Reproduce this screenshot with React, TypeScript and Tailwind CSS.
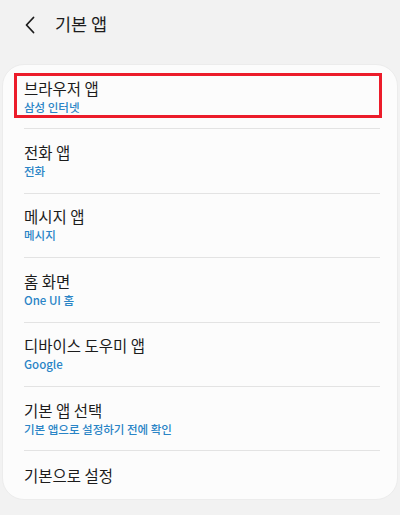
const rows = [
  { title: "브라우저 앱", sub: "삼성 인터넷" },
  { title: "전화 앱", sub: "전화" },
  { title: "메시지 앱", sub: "메시지" },
  { title: "홈 화면", sub: "One UI 홈" },
  { title: "디바이스 도우미 앱", sub: "Google" },
  { title: "기본 앱 선택", sub: "기본 앱으로 설정하기 전에 확인" },
];

export default function App() {
  return (
    <div
      className="w-[400px] h-[515px] bg-[#f2f2f2] overflow-hidden"
      style={{ fontFamily: '"Noto Sans CJK KR", "Noto Sans", Roboto, sans-serif' }}
    >
      <header className="h-[64px] flex items-start pt-[12px] pl-[22px]">
        <svg width="18" height="24" viewBox="0 0 18 24" className="mt-[1px]">
          <path d="M11.5 4.5 L4.5 12 L11.5 19.5" fill="none" stroke="#1c1c1c" strokeWidth="1.8" strokeLinecap="round" strokeLinejoin="round" />
        </svg>
        <h1 className="ml-[15px] text-[17.5px] leading-[24px] text-[#1c1c1c]">기본 앱</h1>
      </header>

      <div className="mx-[2px] bg-[#fcfcfc] rounded-[22px] border border-[#ececec]">
        {rows.map((r, i) => (
          <div key={r.title} className="relative h-[64.4px] pl-[21px] pr-[17px]">
            <div className="h-full flex flex-col justify-center border-b border-[#e3e3e3]">
              <div className="text-[15.5px] leading-[19px] text-[#1c1c1c]">{r.title}</div>
              <div className="text-[11.5px] leading-[15px] mt-[2px] font-medium text-[#2a84c6]">{r.sub}</div>
            </div>
            {i === 0 && (
              <div className="absolute left-[11px] right-[15px] top-[8px] h-[45px] border-[3px] border-[#ec1c2a]" />
            )}
          </div>
        ))}
        <div className="h-[48px] pl-[21px] flex items-center text-[15.5px] text-[#1c1c1c]">기본으로 설정</div>
      </div>
    </div>
  );
}
